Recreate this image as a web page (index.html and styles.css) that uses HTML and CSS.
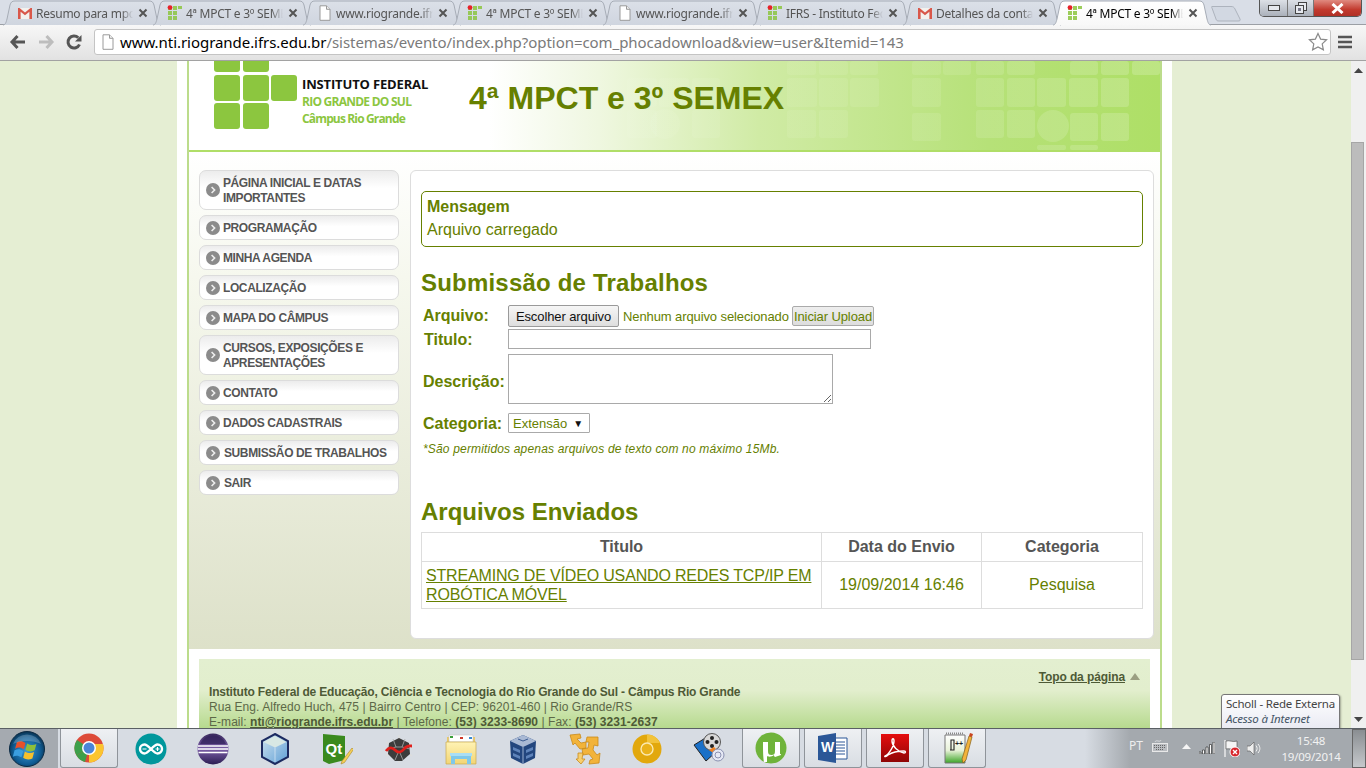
FILE: index.html
```html
<!DOCTYPE html>
<html lang="pt">
<head>
<meta charset="utf-8">
<title>4ª MPCT e 3º SEMEX</title>
<link rel="stylesheet" href="styles.css">
</head>
<body>
<svg class="defs" width="0" height="0" aria-hidden="true">
  <defs>
    <linearGradient id="gTab" x1="0" y1="0" x2="0" y2="1"><stop offset="0" stop-color="#dbe0e8"/><stop offset="1" stop-color="#cfd5df"/></linearGradient>
    <linearGradient id="gAct" x1="0" y1="0" x2="0" y2="1"><stop offset="0" stop-color="#ffffff"/><stop offset="1" stop-color="#f8f8f8"/></linearGradient>
    <radialGradient id="gOrb" cx=".5" cy=".55" r=".55"><stop offset="0" stop-color="#3d9ad6"/><stop offset=".7" stop-color="#0f5c94"/><stop offset="1" stop-color="#0a3250"/></radialGradient>
    <linearGradient id="gEcl" x1="0" y1="0" x2="0" y2="1"><stop offset="0" stop-color="#3a2a5e"/><stop offset=".5" stop-color="#7c5fa8"/><stop offset="1" stop-color="#2b1d52"/></linearGradient>
    <linearGradient id="gCube" x1="0" y1="0" x2="1" y2="1"><stop offset="0" stop-color="#cfe3ef"/><stop offset="1" stop-color="#5f9fd6"/></linearGradient>
    <linearGradient id="gPdf" x1="0" y1="0" x2="0" y2="1"><stop offset="0" stop-color="#e50e0e"/><stop offset="1" stop-color="#8f0606"/></linearGradient>
    <linearGradient id="gNpp" x1="0" y1="0" x2="0" y2="1"><stop offset="0" stop-color="#ffffff"/><stop offset=".55" stop-color="#e8f2d8"/><stop offset="1" stop-color="#3da528"/></linearGradient>
    <linearGradient id="gFold" x1="0" y1="0" x2="0" y2="1"><stop offset="0" stop-color="#fff3b5"/><stop offset="1" stop-color="#f2d574"/></linearGradient>
    <linearGradient id="gPat" gradientUnits="userSpaceOnUse" x1="430" y1="0" x2="971" y2="0"><stop offset="0" stop-color="#fff" stop-opacity=".05"/><stop offset=".6" stop-color="#fff" stop-opacity=".1"/><stop offset="1" stop-color="#fff" stop-opacity=".19"/></linearGradient>
    <symbol id="ifico" viewBox="0 0 16 16">
      <g fill="#8cc63f" opacity=".85">
        <rect x="1" y="1" width="4" height="4"/><rect x="6" y="1" width="4" height="4"/><rect x="11" y="1" width="4" height="3"/>
        <rect x="1" y="6" width="4" height="4"/><rect x="6" y="6" width="4" height="4"/>
        <rect x="1" y="11" width="4" height="4"/><rect x="6" y="11" width="4" height="4"/>
      </g>
      <circle cx="3" cy="2.6" r="2.4" fill="#e8202a"/>
    </symbol>
    <symbol id="gmail" viewBox="0 0 16 16">
      <path d="M1 3h14v11H1z" fill="#f3f1ee"/>
      <path d="M1 14V3h1.5L8 7.6 13.5 3H15v11h-2.6V6.8L8 10.3 3.6 6.8V14z" fill="#d9574a"/>
    </symbol>
    <symbol id="page" viewBox="0 0 16 16">
      <path d="M3 .8h6.5L13 4.3v11H3z" fill="#fff" stroke="#9a9a9a"/>
      <path d="M9.5 .8v3.5H13" fill="#eee" stroke="#9a9a9a"/>
    </symbol>
    <symbol id="tabshape" viewBox="0 0 164 26">
      <path d="M3 25C5 25 6 23 7 19L10 5C11 2 12 1 15 1H149C152 1 153 2 154 5L157 19C158 23 159 25 161 25" stroke="#a6acb6" stroke-width="1"/>
    </symbol>
    <symbol id="cx" viewBox="0 0 10 10">
      <path d="M1.5 1.5l7 7M8.5 1.5l-7 7" stroke="#555" stroke-width="2" fill="none"/>
    </symbol>
    <symbol id="arrow" viewBox="0 0 14 14">
      <path d="M7 2l5 7H2z" fill="#9b9f82"/>
    </symbol>
    <symbol id="chev" viewBox="0 0 14 14">
      <circle cx="7" cy="7" r="7" fill="#8b8b8b"/>
      <path d="M5.6 4l3 3-3 3" stroke="#eee" stroke-width="1.6" fill="none"/>
    </symbol>
  </defs>
</svg>
<div class="window">
  <header class="strip">
    <div class="tab"><svg class="tabbg"><use href="#tabshape" fill="url(#gTab)"/></svg><svg class="fav"><use href="#gmail"/></svg><span class="tabname">Resumo para mpct</span><svg class="close"><use href="#cx"/></svg></div>
    <div class="tab"><svg class="tabbg"><use href="#tabshape" fill="url(#gTab)"/></svg><svg class="fav"><use href="#ifico"/></svg><span class="tabname">4ª MPCT e 3º SEMEX</span><svg class="close"><use href="#cx"/></svg></div>
    <div class="tab"><svg class="tabbg"><use href="#tabshape" fill="url(#gTab)"/></svg><svg class="fav"><use href="#page"/></svg><span class="tabname">www.riogrande.ifrs</span><svg class="close"><use href="#cx"/></svg></div>
    <div class="tab"><svg class="tabbg"><use href="#tabshape" fill="url(#gTab)"/></svg><svg class="fav"><use href="#ifico"/></svg><span class="tabname">4ª MPCT e 3º SEMEX</span><svg class="close"><use href="#cx"/></svg></div>
    <div class="tab"><svg class="tabbg"><use href="#tabshape" fill="url(#gTab)"/></svg><svg class="fav"><use href="#page"/></svg><span class="tabname">www.riogrande.ifrs</span><svg class="close"><use href="#cx"/></svg></div>
    <div class="tab"><svg class="tabbg"><use href="#tabshape" fill="url(#gTab)"/></svg><svg class="fav"><use href="#ifico"/></svg><span class="tabname">IFRS - Instituto Federal</span><svg class="close"><use href="#cx"/></svg></div>
    <div class="tab"><svg class="tabbg"><use href="#tabshape" fill="url(#gTab)"/></svg><svg class="fav"><use href="#gmail"/></svg><span class="tabname">Detalhes da conta</span><svg class="close"><use href="#cx"/></svg></div>
    <div class="tab tab-active"><svg class="tabbg"><use href="#tabshape" fill="url(#gAct)"/></svg><svg class="fav"><use href="#ifico"/></svg><span class="tabname">4ª MPCT e 3º SEMEX</span><svg class="close"><use href="#cx"/></svg></div>
    <svg class="newtab" viewBox="0 0 30 17"><path d="M1 1.5H20C22 1.5 23 2 24 4L29 14C29.5 15.5 29 16 27 16H8C6 16 5.5 15.5 5 14L1 3C.5 2 .5 1.5 1 1.5Z" fill="#d2d8e2" stroke="#adb3bd"/></svg>
    <div class="winctl">
      <div class="wbtn wmin"><svg width="12" height="6" viewBox="0 0 12 6"><rect x=".5" y=".5" width="11" height="5" fill="#e6e9ee" stroke="#444"/></svg></div>
      <div class="wbtn wmax"><svg width="12" height="12" viewBox="0 0 12 12"><rect x="3.5" y=".5" width="8" height="8" fill="#e6e9ee" stroke="#444"/><rect x=".5" y="3.5" width="8" height="8" fill="#e6e9ee" stroke="#444"/><rect x="3" y="6" width="3" height="3" fill="#778"/></svg></div>
      <div class="wbtn wclose"><svg width="13" height="11" viewBox="0 0 13 11"><path d="M1.5 1l10 9M11.5 1l-10 9" stroke="#fff" stroke-width="3"/></svg></div>
    </div>
  </header>

  <nav class="toolbar">
    <svg class="tool" viewBox="0 0 18 18"><path d="M8.5 3L3 9l5.500 6M3.500 9H16" stroke="#555" stroke-width="3" fill="none"/></svg>
    <svg class="tool" viewBox="0 0 18 18"><path d="M9.500 3L15 9l-5.500 6M14.500 9H2" stroke="#bdbdbd" stroke-width="3" fill="none"/></svg>
    <svg class="tool" viewBox="0 0 18 18"><path d="M14.500 11.500A6 6 0 1 1 13.300 4.800" stroke="#555" stroke-width="3" fill="none"/><path d="M16.500 2v6.500H10z" fill="#555"/></svg>
    <div class="omnibox">
      <svg class="omnidoc"><use href="#page"/></svg>
      <span class="url"><span class="url-host">www.nti.riogrande.ifrs.edu.br</span>/sistemas/evento/index.php?option=com_phocadownload&amp;view=user&amp;Itemid=143</span>
      <svg class="star" viewBox="0 0 20 20"><path d="M10 1.500l2.600 5.600 6 .7-4.400 4.100 1.200 6L10 15l-5.400 2.900 1.200-6L1.400 7.800l6-.7z" fill="#fff" stroke="#8a8a8a" stroke-width="1.200"/></svg>
    </div>
    <svg class="menuic" viewBox="0 0 14 14"><path d="M0 2h14M0 7h14M0 12h14" stroke="#555" stroke-width="2.600"/></svg>
  </nav>

  <div class="viewport">
    <div class="canvas">
      <div class="sheet">
        <div class="frame">
          <section class="banner">
            <svg class="pattern" viewBox="0 0 971 89" preserveAspectRatio="none">
              <g fill="url(#gPat)">
                <rect x="438" y="17" width="30" height="29" rx="3"/><rect x="470" y="17" width="30" height="29" rx="3"/><rect x="503" y="17" width="28" height="29" rx="3"/>
                <rect x="438" y="49" width="30" height="28" rx="3"/><circle cx="476" cy="63" r="15"/><rect x="503" y="49" width="28" height="28" rx="3"/>
                <rect x="598" y="0" width="29" height="14" rx="3"/><rect x="630" y="0" width="29" height="14" rx="3"/><rect x="661" y="0" width="28" height="14" rx="3"/><rect x="723" y="0" width="29" height="14" rx="3"/><rect x="754" y="0" width="28" height="14" rx="3"/><rect x="787" y="0" width="28" height="14" rx="3"/><rect x="818" y="0" width="28" height="14" rx="3"/><rect x="881" y="0" width="28" height="14" rx="3"/><rect x="912" y="0" width="28" height="14" rx="3"/><rect x="943" y="0" width="28" height="14" rx="3"/>
                <rect x="598" y="17" width="30" height="29" rx="3"/><rect x="630" y="17" width="29" height="29" rx="3"/><rect x="661" y="17" width="29" height="29" rx="3"/><rect x="723" y="17" width="29" height="29" rx="3"/><rect x="787" y="17" width="28" height="29" rx="3"/><rect x="818" y="17" width="28" height="29" rx="3"/><rect x="848" y="17" width="29" height="29" rx="3"/><rect x="880" y="17" width="29" height="29" rx="3"/><rect x="912" y="17" width="28" height="29" rx="3"/>
                <rect x="598" y="49" width="29" height="28" rx="3"/><rect x="630" y="49" width="29" height="28" rx="3"/><rect x="723" y="52" width="29" height="28" rx="3"/><rect x="787" y="49" width="28" height="28" rx="3"/><rect x="818" y="49" width="28" height="28" rx="3"/><circle cx="864" cy="65" r="16"/><rect x="881" y="52" width="28" height="28" rx="3"/><rect x="912" y="52" width="28" height="28" rx="3"/>
                <rect x="848" y="84" width="29" height="5" rx="2"/><rect x="881" y="84" width="28" height="5" rx="2"/>
              </g>
            </svg>
            <div class="logo">
              <div class="logo-grid">
                <span class="sq"></span><span class="sq"></span><span class="sq sq-empty"></span>
                <span class="sq"></span><span class="sq"></span><span class="sq"></span>
                <span class="sq"></span><span class="sq"></span><span class="sq sq-empty"></span>
              </div>
              <div class="logo-text">
                <div class="lt-a">INSTITUTO FEDERAL</div>
                <div class="lt-b">RIO GRANDE DO SUL</div>
                <div class="lt-c">Câmpus Rio Grande</div>
              </div>
            </div>
            <h1 class="event">4ª MPCT e 3º SEMEX</h1>
          </section>

          <section class="body">
            <aside class="menu">
              <a class="mi mi-2"><svg class="mi-ic"><use href="#chev"/></svg><span>PÁGINA INICIAL E DATAS IMPORTANTES</span></a>
              <a class="mi"><svg class="mi-ic"><use href="#chev"/></svg><span>PROGRAMAÇÃO</span></a>
              <a class="mi"><svg class="mi-ic"><use href="#chev"/></svg><span>MINHA AGENDA</span></a>
              <a class="mi"><svg class="mi-ic"><use href="#chev"/></svg><span>LOCALIZAÇÃO</span></a>
              <a class="mi"><svg class="mi-ic"><use href="#chev"/></svg><span>MAPA DO CÂMPUS</span></a>
              <a class="mi mi-2"><svg class="mi-ic"><use href="#chev"/></svg><span>CURSOS, EXPOSIÇÕES E APRESENTAÇÕES</span></a>
              <a class="mi"><svg class="mi-ic"><use href="#chev"/></svg><span>CONTATO</span></a>
              <a class="mi"><svg class="mi-ic"><use href="#chev"/></svg><span>DADOS CADASTRAIS</span></a>
              <a class="mi mi-off"><svg class="mi-ic"><use href="#chev"/></svg><span>SUBMISSÃO DE TRABALHOS</span></a>
              <a class="mi mi-off"><svg class="mi-ic"><use href="#chev"/></svg><span>SAIR</span></a>
            </aside>
            <main class="card">
              <div class="msg">
                <div class="msg-t">Mensagem</div>
                <div class="msg-b">Arquivo carregado</div>
              </div>
              <h2 class="h-a">Submissão de Trabalhos</h2>
              <form class="form">
                <div class="row r1"><label class="lab">Arquivo:</label><span class="filebtn">Escolher arquivo</span><span class="nofile">Nenhum arquivo selecionado</span><span class="upbtn">Iniciar Upload</span></div>
                <div class="row r2"><label class="lab lab-t">Titulo:</label><input class="inp" type="text"></div>
                <div class="row r3"><label class="lab">Descrição:</label><textarea class="area"></textarea></div>
                <div class="row r4"><label class="lab">Categoria:</label><span class="sel">Extensão<span class="sel-ar">▼</span></span></div>
              </form>
              <p class="note">*São permitidos apenas arquivos de texto com no máximo 15Mb.</p>
              <h2 class="h-b">Arquivos Enviados</h2>
              <table class="files">
                <colgroup><col class="c1"><col class="c2"><col class="c3"></colgroup>
                <thead><tr><th>Titulo</th><th>Data do Envio</th><th>Categoria</th></tr></thead>
                <tbody><tr><td class="tl"><a class="flink">STREAMING DE VÍDEO USANDO REDES TCP/IP EM ROBÓTICA MÓVEL</a></td><td>19/09/2014 16:46</td><td>Pesquisa</td></tr></tbody>
              </table>
            </main>
          </section>

          <div class="gapstrip"></div>
          <footer class="foot">
            <div class="topo"><a class="topolink">Topo da página</a><svg class="topoar"><use href="#arrow"/></svg></div>
            <div class="fb">Instituto Federal de Educação, Ciência e Tecnologia do Rio Grande do Sul - Câmpus Rio Grande</div>
            <div class="fn">Rua Eng. Alfredo Huch, 475 | Bairro Centro | CEP: 96201-460 | Rio Grande/RS</div>
            <div class="fn">E-mail: <a class="mail">nti@riogrande.ifrs.edu.br</a> | Telefone: <b>(53) 3233-8690</b> | Fax: <b>(53) 3231-2637</b></div>
          </footer>
        </div>
      </div>
    </div>
    <div class="scrollbar">
      <div class="sb-btn"><svg width="9" height="5" viewBox="0 0 9 5"><path d="M4.500 0L9 5H0z" fill="#444"/></svg></div>
      <div class="sb-thumb"></div>
      <div class="sb-btn sb-end"><svg width="9" height="5" viewBox="0 0 9 5"><path d="M4.500 5L9 0H0z" fill="#444"/></svg></div>
    </div>
    <div class="tip"><div>Scholl - Rede Externa</div><div class="tip-i">Acesso à Internet</div></div>
  </div>

  <footer class="taskbar">
    <div class="start">
      <svg class="orb" viewBox="0 0 36 36"><circle cx="18" cy="18" r="17.500" fill="url(#gOrb)" stroke="#0b2a44"/><g transform="translate(-2.500 -2.500) scale(1.15)"><path d="M9 12c3-1.500 5-1 7.500.5l-1.500 5.500c-2.500-1.500-4.500-2-7.500-.5z" fill="#e8502a"/><path d="M18 13c2.500 1.500 5 2 8 .5l-1.500 5.500c-3 1.500-5.500 1-8-.5z" fill="#8ebf3a"/><path d="M7 19c3-1.500 5-1 7.500.5L13 25c-2.500-1.500-4.500-2-7.500-.5z" fill="#3a9ee0"/><path d="M16 20c2.500 1.500 5 2 8 .5L22.500 26c-3 1.500-5.500 1-8-.5z" fill="#f6c02c"/></g><path d="M4 13A15 15 0 0 1 32 13C24 9 12 9 4 13z" fill="#fff" opacity=".22"/></svg>
    </div>
    <div class="tb tb-on"><svg class="tbi" viewBox="0 0 32 32"><circle cx="16" cy="16" r="14.500" fill="#dd4b39"/><path d="M16 16L3.500 23.500A14.500 14.500 0 0 1 4 8z" fill="#3da04a"/><path d="M16 16l-4 14.100A14.500 14.500 0 0 1 3.500 23.500z" fill="#3da04a"/><path d="M16 30.500A14.500 14.500 0 0 0 30 12H16z" fill="#fbc52f"/><circle cx="16" cy="16" r="7" fill="#fff"/><circle cx="16" cy="16" r="5.500" fill="#4a86d8"/></svg></div>
    <div class="tb"><svg class="tbi" viewBox="0 0 32 32"><circle cx="16" cy="16" r="15.500" fill="#00979c"/><path d="M9.500 11.500a4.500 4.500 0 1 0 0 9c4 0 9-9 13-9a4.500 4.500 0 1 1 0 9c-4 0-9-9-13-9z" fill="none" stroke="#fff" stroke-width="2.400"/><path d="M7.500 16h4M20.500 16h4M22.500 14v4" stroke="#fff" stroke-width="1.200"/></svg></div>
    <div class="tb"><svg class="tbi" viewBox="0 0 32 32"><circle cx="16" cy="16" r="15.500" fill="url(#gEcl)"/><path d="M1 13h30M.8 16h30.400M1.500 19.500h29" stroke="#fff" stroke-width="1.300"/><path d="M3 11A14 14 0 0 1 29 11" fill="#31215a" opacity=".7"/></svg></div>
    <div class="tb"><svg class="tbi" viewBox="0 0 32 32"><path d="M16 1l13 7v16l-13 7-13-7V8z" fill="url(#gCube)" stroke="#1c2a60" stroke-width="2"/><path d="M4.500 9L16 14.500 27.500 9 16 3z" fill="#d8e8e4"/><path d="M16 14.500V29" stroke="#fff" stroke-opacity=".5"/></svg></div>
    <div class="tb"><svg class="tbi" viewBox="0 0 32 32"><path d="M2 1l22 2v24L8 31 2 28z" fill="#3a8a1e"/><text class="qt" x="4.500" y="21">Qt</text><path d="M21 28l10-13 1.500 1.500-9 13-3.500 1.500z" fill="#f5cf57" stroke="#a8862c" stroke-width=".6"/></svg></div>
    <div class="tb"><svg class="tbi" viewBox="0 0 32 32"><path d="M16 2v5M16 25v5M3 9l4 3M29 9l-4 3M3 23l4-3M29 23l-4-3" stroke="#ddd" stroke-width="1.500"/><path d="M16 5l10 5 1 11-8 7h-7l-7-7 1-11z" fill="#3c3c3c"/><path d="M10 6l3 8-8 2M22 6l-3 8 8 2M13 14h6M12 27l3-7M20 27l-3-7" stroke="#aaa" stroke-width=".8" fill="none"/><path d="M3 18c3-4 6-4 9-1s6 3 9-1 5-3 8-3" stroke="#e0201c" stroke-width="2.800" fill="none"/></svg></div>
    <div class="tb"><svg class="tbi" viewBox="0 0 32 32"><path d="M2 4h28v26H2z" fill="#e9c868"/><path d="M4 2h24v7H4z" fill="#fff" stroke="#c4c4c4" stroke-width=".6"/><path d="M5 3h3v2H5z" fill="#3aa03a"/><path d="M15 4h3v2h-3z" fill="#d03a2a"/><path d="M24 4h3v2h-3z" fill="#3a8ad0"/><path d="M1 9h30v22H1z" fill="url(#gFold)" stroke="#c9a94e" stroke-width=".7"/><path d="M6 31v-9h20v9h-4v-5H10v5z" fill="#7fc8ea"/><path d="M5 20h22v3H5z" fill="#a9def5"/></svg></div>
    <div class="tb"><svg class="tbi" viewBox="0 0 32 32"><path d="M16 2l13 6-1 17-12 6-12-6-1-17z" fill="#23467e"/><path d="M16 2l13 6-13 6L3 8z" fill="#a9b9d4"/><path d="M16 14v17" stroke="#9cb0d0"/><path d="M6 14l7 3v3l-7-3zM6 20l7 3v3l-7-3zM26 14l-7 3v3l7-3zM26 20l-7 3v3l7-3z" fill="#5f84bb"/><path d="M11 6l5 2 5-2" stroke="#3a5a90" fill="none"/></svg></div>
    <div class="tb"><svg class="tbi" viewBox="0 0 32 32"><path d="M1 2l10-1 1 4-4 1 4 4 5-1v6l-6 1-5-6-2 2zM18 4l11 0 0 9-4-1-1 5 4 5 3-2-1 10-10 1 1-4 3-1-4-5-6 1-1-6 6-1 1-6-3 0z" fill="#f2b33a" stroke="#c98a1a" stroke-width=".8"/><path d="M9 20l5 0-1 6 3 0-4 5-5-5 2 0z" fill="#f7cf6e" stroke="#c98a1a" stroke-width=".8"/></svg></div>
    <div class="tb"><svg class="tbi" viewBox="0 0 32 32"><circle cx="16" cy="16" r="14.500" fill="#e2a80c"/><path d="M16 1.500A14.500 14.500 0 0 1 29 10H16z" fill="#f2c33a"/><circle cx="16" cy="16" r="6" fill="#eab21a" stroke="#fbe9b0" stroke-width="1.400"/></svg></div>
    <div class="tb"><svg class="tbi" viewBox="0 0 32 32"><path d="M1 12L14 4l9 15-10 9z" fill="#1a70c8" stroke="#222"/><circle cx="19" cy="9" r="8.500" fill="#d8d8d8" stroke="#555"/><circle cx="19" cy="5" r="2" fill="#222"/><circle cx="14.500" cy="9" r="2" fill="#222"/><circle cx="23.500" cy="9" r="2" fill="#222"/><circle cx="19" cy="13" r="2" fill="#222"/><path d="M16 17l5-3 3 3-4 3z" fill="#f08020"/><circle cx="25" cy="22" r="6" fill="#e6e9f5" stroke="#8a90b0"/><circle cx="25" cy="22" r="3" fill="none" stroke="#8a90b0"/></svg></div>
    <div class="tb tb-on"><svg class="tbi" viewBox="0 0 32 32"><circle cx="16" cy="16" r="15.500" fill="#6fb33a"/><path d="M8 10h5v9c0 3 1 4 3.500 4s3.500-1 3.500-4v-9h5v12c1 0 1 .5 1 1l-6 2c-1-1-1-1-1-2-2 2-6 2-7 1v6H9c-1-5-1-13-1-20z" fill="#fff"/></svg></div>
    <div class="tb tb-on"><svg class="tbi" viewBox="0 0 32 32"><path d="M16 6h14v21H16z" fill="#fff" stroke="#2b5797"/><path d="M19 10h9M19 13h9M19 16h9M19 19h9M19 22h9" stroke="#2b5797" stroke-width="1.200"/><path d="M1 4l18-3v30L1 28z" fill="#2b5797"/><text class="wd" x="4" y="20">W</text></svg></div>
    <div class="tb tb-on"><svg class="tbi" viewBox="0 0 32 32"><rect x="2" y="2" width="28" height="28" fill="url(#gPdf)"/><path d="M6 24c3-1 9-9 9-15 0-3-2-3-2 0 0 5 6 11 12 12 2 0 2-2 0-2-6 0-13 2-16 4-2 2-4 2-3 1z" fill="none" stroke="#fff" stroke-width="1.400"/></svg></div>
    <div class="tb tb-on"><svg class="tbi" viewBox="0 0 32 32"><path d="M4 3h20v28H4z" fill="url(#gNpp)" stroke="#777"/><path d="M5 1.500h18" stroke="#888" stroke-dasharray="1 1" stroke-width="2"/><path d="M10 8v10h3V8zM9 18h3" fill="none" stroke="#222" stroke-width="1.100"/><text class="npp" x="14" y="14">++</text><path d="M21 27l7-23 3 1-6 23-3 3z" fill="#f2b33a" stroke="#85601a" stroke-width=".7"/><path d="M28 4l1-3 3 1-1 3z" fill="#c9451f"/></svg></div>
    <div class="tray">
      <span class="lang">PT</span>
      <svg class="trk" viewBox="0 0 16 13"><path d="M3 3c1-3 5 1 6-2" fill="none" stroke="#d8dadd"/><rect x=".5" y="4.500" width="15" height="8" fill="#b9bcc0" stroke="#e8e8e8"/><path d="M2 6.500h12M2 8.500h12M4 10.500h8" stroke="#666" stroke-dasharray="1 1"/></svg>
      <svg class="tru" viewBox="0 0 9 5"><path d="M4.500 0L9 5H0z" fill="#f5f5f5"/></svg>
      <svg class="trs" viewBox="0 0 16 12"><path d="M0 10h2v2H0zM3.500 8h2v4h-2zM7 5h2v7H7zM10.500 2.500h2V12h-2zM14 0h2v12h-2z" fill="#fff" stroke="#333" stroke-width=".7"/></svg>
      <svg class="trf" viewBox="0 0 16 17"><path d="M1 0v17" stroke="#eee" stroke-width="1.400"/><path d="M2 1c4-1 6 1.500 11 0v8c-5 1.500-7-1-11 0z" fill="#f5f5f5" stroke="#444" stroke-width=".6"/><circle cx="11" cy="12" r="5" fill="#d8262c" stroke="#fff"/><path d="M9 10l4 4M13 10l-4 4" stroke="#fff" stroke-width="1.400"/></svg>
      <svg class="trv" viewBox="0 0 15 15"><path d="M0 5h3l4-4v13l-4-4H0z" fill="#eee" stroke="#555" stroke-width=".6"/><path d="M9 4.500c1.500 2 1.500 4 0 6M11 3c2.500 3 2.500 6 0 9" stroke="#f2f2f2" fill="none"/></svg>
      <div class="clock"><div>15:48</div><div>19/09/2014</div></div>
      <div class="showdesk"></div>
    </div>
  </footer>
</div>
</body>
</html>
```

FILE: styles.css
```css
* { box-sizing: border-box; }
html, body { margin: 0; padding: 0; height: 100%; overflow: hidden; }
body { font-family: "Liberation Sans", Arial, sans-serif; background: #e5eed3; }
.defs { position: absolute; width: 0; height: 0; }
.window { width: 1366px; height: 768px; display: flex; flex-direction: column; }

/* tab strip */
.strip { height: 25px; display: flex; align-items: flex-start; background: #d9dee7; border-bottom: 1px solid #9b9fa5; font-family: "Noto Sans", "Open Sans", sans-serif; flex: none; }
.tab { position: relative; width: 150px; height: 24px; flex: none; display: flex; align-items: center; padding: 2px 0 0 17px; font-size: 12px; letter-spacing: -.25px; color: #555; }
.tabbg { position: absolute; left: 0; top: 0; width: 164px; height: 26px; }
.fav { position: relative; width: 16px; height: 16px; flex: none; }
.tabname { position: relative; margin-left: 3px; width: 97px; white-space: nowrap; overflow: hidden; -webkit-mask-image: linear-gradient(90deg, #000 88%, transparent 100%); mask-image: linear-gradient(90deg, #000 88%, transparent 100%); }
.close { position: relative; width: 10px; height: 10px; margin-left: 5px; flex: none; }
.tab-active { color: #000; z-index: 2; }
.newtab { width: 30px; height: 17px; margin: 5px 0 0 11px; flex: none; }
.winctl { margin-left: auto; margin-right: 4px; display: flex; height: 17px; border: 1px solid #555; border-top: 0; border-radius: 0 0 5px 5px; overflow: hidden; }
.wbtn { display: flex; align-items: center; justify-content: center; height: 16px; }
.wmin { width: 28px; background: linear-gradient(#dce0e6, #aab0ba); border-right: 1px solid #777; }
.wmax { width: 26px; background: linear-gradient(#dce0e6, #aab0ba); border-right: 1px solid #777; }
.wclose { width: 47px; background: linear-gradient(#e08a80, #c23a2e 60%, #b03026); }

/* toolbar */
.toolbar { height: 36px; flex: none; display: flex; align-items: center; padding: 0 14px 1px 9px; background: linear-gradient(#f7f7f7, #e2e2e2); border-bottom: 1px solid #a2a2a2; }
.tool { width: 18px; height: 18px; margin-right: 10px; flex: none; }
.omnibox { flex: 1; height: 26px; margin: 0 7px 0 1px; background: #fff; border: 1px solid #c4c4c4; border-radius: 3px; display: flex; align-items: center; padding: 0 1px 0 5px; }
.omnidoc { width: 16px; height: 16px; flex: none; }
.url { margin-left: 4px; padding-bottom: 1px; font-family: "Noto Sans", "Open Sans", sans-serif; font-size: 15px; letter-spacing: -.05px; color: #7a7a7a; white-space: nowrap; flex: 1; }
.url-host { color: #000; }
.star { width: 20px; height: 20px; flex: none; margin-right: 1px; }
.menuic { width: 14px; height: 14px; flex: none; }

/* viewport */
.viewport { position: relative; flex: 1; display: flex; overflow: hidden; min-height: 0; background: #e5eed3; }
.canvas { flex: 1; min-width: 0; padding-left: 177px; }
.sheet { width: 995px; padding: 0 10px; background: #fff; height: 100%; overflow: hidden; }
.frame { border-left: 2px solid #bcdc8c; border-right: 2px solid #bcdc8c; width: 975px; min-height: 100%; }
.scrollbar { width: 15px; flex: none; background: #f0f0f0; display: flex; flex-direction: column; }
.sb-btn { height: 18px; display: flex; align-items: center; justify-content: center; }
.sb-thumb { width: 13px; height: 518px; margin-top: 63px; background: #bcbcbc; border: 1px solid #a6a6a6; }
.sb-end { margin-top: auto; }
.tip { position: absolute; left: 1221px; top: 633px; width: 119px; height: 44px; padding: 1px 4px; border: 1px solid #777; border-radius: 3px; background: linear-gradient(#fff, #e4e5f0); font-family: "Noto Sans", "Open Sans", sans-serif; font-size: 11.500px; letter-spacing: -.2px; line-height: 15px; color: #444; box-shadow: 1px 1px 2px rgba(0,0,0,.3); white-space: nowrap; }
.tip-i { font-style: italic; color: #456; }

/* banner */
.banner { position: relative; height: 91px; border-bottom: 2px solid #b0de68; display: flex; align-items: flex-start; background: linear-gradient(90deg, #fff 0, #fff 300px, #eff7e0 410px, #d0eba5 570px, #b6e178 800px, #aedf66 971px); }
.pattern { position: absolute; left: 0; top: 0; width: 971px; height: 89px; }
.logo { position: relative; display: flex; width: 255px; margin-left: 25px; flex: none; }
.logo-grid { display: grid; grid-template-columns: repeat(3, 26px); grid-template-rows: 11px 26px 26px; column-gap: 2.500px; row-gap: 2.500px; flex: none; }
.sq { background: #8cc63f; border-radius: 3px; }
.sq:nth-child(-n+2) { border-radius: 0 0 3px 3px; }
.sq-empty { background: transparent; }
.logo-text { margin: 15px 0 0 5px; font-weight: 700; white-space: nowrap; font-family: "Open Sans", sans-serif; }
.lt-a { font-size: 13px; line-height: 17px; color: #111; letter-spacing: -.15px; }
.lt-b { font-size: 12px; line-height: 17px; color: #8cc63f; letter-spacing: -.75px; }
.lt-c { font-size: 12px; line-height: 17px; color: #8cc63f; letter-spacing: -.85px; }
.event { position: relative; margin: 19px 0 0 0; font-size: 32px; line-height: 37px; font-weight: 700; color: #668000; white-space: nowrap; }

/* body */
.body { display: flex; align-items: flex-start; height: 497px; padding: 18px 6px 0 10px; background: linear-gradient(#fff 0, #f6f8ee 25%, #dde1c9 100%); }
.menu { width: 200px; display: flex; flex-direction: column; gap: 5px; flex: none; }
.mi { display: flex; align-items: center; height: 25px; padding: 0 6px; border: 1px solid #dcdcdc; border-radius: 7px; background: linear-gradient(#ececec, #fff 45%); font-size: 12px; letter-spacing: -.4px; line-height: 15px; font-weight: 700; color: #555; }
.mi span { padding-top: 2px; }
.mi-2 { height: 40px; }
.mi-off span { margin-left: 1px; }
.mi-ic { width: 14px; height: 14px; margin-right: 3px; flex: none; }
.card { width: 744px; height: 469px; margin-left: 11px; padding: 20px 10px 0; background: #fff; border: 1px solid #ddd; border-radius: 6px; color: #668000; }
.msg { height: 56px; border: 1px solid #668000; border-radius: 5px; padding: 3px 5px; font-size: 16px; line-height: 23px; }
.msg-t { font-weight: 700; }
.h-a, .h-b { margin: 22px 0 8px; font-size: 24px; line-height: 28px; font-weight: 700; color: #668000; white-space: nowrap; }
.h-a { letter-spacing: .2px; }
.h-b { margin: 42px 0 6px; }
.form { display: flex; flex-direction: column; }
.row { display: flex; align-items: center; }
.lab { width: 87px; padding-left: 2px; flex: none; font-size: 16px; font-weight: 700; color: #668000; white-space: nowrap; }
.lab-t { padding-left: 3px; padding-top: 2px; }
.r1 { height: 22px; }
.r2 { height: 20px; margin-top: 2px; }
.r3 { height: 50px; margin-top: 5px; }
.r3 .lab { padding-top: 6px; }
.r4 { height: 20px; margin-top: 9px; }
.r4 .lab { padding-top: 2px; }
.filebtn { width: 111px; height: 22px; display: flex; align-items: center; justify-content: center; font-size: 13px; letter-spacing: -.1px; color: #111; border: 1px solid #9a9a9a; border-radius: 2px; background: linear-gradient(#f6f6f6, #dedede); }
.nofile { margin-left: 4px; width: 169px; font-size: 13px; letter-spacing: -.1px; white-space: nowrap; }
.upbtn { width: 82px; height: 20px; display: flex; align-items: center; justify-content: center; font-size: 13px; letter-spacing: -.1px; white-space: nowrap; border: 1px solid #aaa; border-radius: 2px; background: linear-gradient(#eee, #ddd); }
.inp { width: 363px; height: 20px; margin: 0; border: 1px solid #a9a9a9; padding: 0; background: #fff; }
.area { width: 325px; height: 50px; margin: 0; border: 1px solid #a9a9a9; padding: 0; background: #fff; display: block; }
.sel { width: 82px; height: 20px; display: flex; align-items: center; padding-left: 4px; font-size: 13px; border: 1px solid #aaa; border-radius: 1px; }
.sel-ar { margin-left: 6px; font-size: 10px; color: #111; }
.note { margin: 9px 0 0 2px; font-size: 12px; letter-spacing: .17px; line-height: 14px; font-style: italic; white-space: nowrap; }
.files { width: 721px; table-layout: fixed; border-collapse: collapse; font-size: 16px; line-height: 19px; }
.c1 { width: 400px; } .c2 { width: 160px; } .c3 { width: 161px; }
.files th { height: 29px; padding: 0 4px 2px; border: 1px solid #ddd; color: #555; font-weight: 700; }
.files td { height: 47px; padding: 0 4px 2px; border: 1px solid #ddd; text-align: center; color: #668000; }
.files td.tl { text-align: left; padding-bottom: 0; }
.flink { color: #668000; text-decoration: underline; letter-spacing: -.17px; }

/* footer */
.gapstrip { height: 10px; background: #fff; }
.foot { margin-left: 10px; width: 951px; height: 90px; padding: 11px 10px 0; background: linear-gradient(#e3efd0 0, #e2eecd 35%, #aed682 85%); font-size: 12px; line-height: 15px; color: #5d6848; }
.topo { display: flex; justify-content: flex-end; align-items: center; margin-right: -2px; }
.topolink { font-weight: 700; color: #4e5a36; text-decoration: underline; letter-spacing: -.1px; }
.topoar { width: 14px; height: 14px; margin-left: 3px; }
.fb { font-weight: 700; color: #4e5a36; letter-spacing: -.18px; }
.fn { letter-spacing: .05px; }
.foot b { color: #4e5a36; }
.mail { font-weight: 700; color: #4e5a36; text-decoration: underline; letter-spacing: -.03px; }

/* taskbar */
.taskbar { position: relative; height: 40px; flex: none; display: flex; align-items: stretch; background: linear-gradient(90deg, #d7dce3 0, #d7dce3 1085px, #a4a9ae 1130px, #a4a9ae 100%); border-top: 1px solid #5a5f64; }
.start { width: 58px; margin-right: 2px; background: #a5aab0; display: flex; align-items: center; justify-content: center; flex: none; }
.orb { width: 36px; height: 36px; margin-left: -4px; }
.tb { width: 58px; margin-right: 4px; flex: none; display: flex; align-items: center; justify-content: center; border: 1px solid transparent; }
.tb-on { border-color: #8f949a; border-top: 0; border-radius: 0 0 3px 3px; background: linear-gradient(#eef0f3, #d9dde3); }
.tbi { width: 32px; height: 32px; }
.qt { font-family: "Liberation Sans", sans-serif; font-size: 15px; font-weight: 700; fill: #fff; }
.wd { font-family: "Liberation Sans", sans-serif; font-size: 14px; font-weight: 700; fill: #fff; }
.npp { font-family: "Liberation Sans", sans-serif; font-size: 7px; font-weight: 700; fill: #222; }
.tray { position: absolute; left: 1130px; top: 0; right: 0; height: 39px; display: flex; align-items: flex-start; }
.lang { margin-top: 9px; margin-left: -1px; font-family: "Noto Sans", sans-serif; font-size: 12px; line-height: 16px; color: #eee; width: 22px; }
.trk { width: 16px; height: 13px; margin: 10px 0 0 1px; }
.tru { width: 9px; height: 5px; margin: 15px 0 0 14px; }
.trs { width: 16px; height: 12px; margin: 13px 0 0 8px; }
.trf { width: 16px; height: 17px; margin: 11px 0 0 9px; }
.trv { width: 15px; height: 15px; margin: 12px 0 0 7px; }
.clock { width: 82px; margin-left: 8px; padding-top: 4px; text-align: center; font-family: "Noto Sans", sans-serif; font-size: 11.500px; letter-spacing: -.2px; line-height: 16px; color: #f2f2f2; }
.showdesk { position: absolute; right: 0; top: 0; width: 14px; height: 39px; background: linear-gradient(#8a8e92, #c5c8cb); border: 1px solid #666; }
```
